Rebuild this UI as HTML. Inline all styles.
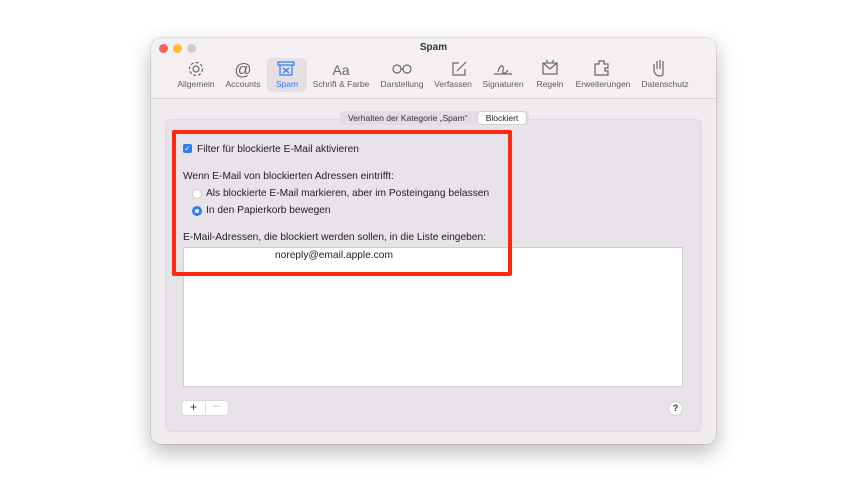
<!DOCTYPE html>
<html><head><meta charset="utf-8"><style>
body{margin:0;width:864px;height:486px;background:#fff;font-family:"Liberation Sans",sans-serif;position:relative;overflow:hidden}
.a{position:absolute}
.win{left:151px;top:38px;width:565px;height:406px;background:#efebef;border-radius:10px;box-shadow:0 8px 22px rgba(0,0,0,.28),0 0 0 1px rgba(0,0,0,.08)}
.tb{left:0;top:0;width:565px;height:60px;background:#f3eff3;border-bottom:1px solid #d8d4d8;border-radius:10px 10px 0 0}
.lbl{font-size:8.5px;color:#5e5a5e;transform:translateX(-50%);white-space:nowrap;top:41px}
.t{font-size:10.2px;color:#222;white-space:nowrap}
</style></head><body>
<div class="a win">
 <div class="a tb"></div>
 <div class="a" style="left:8px;top:6px;width:9px;height:9px;border-radius:50%;background:#fe5f57"></div>
 <div class="a" style="left:22px;top:6px;width:9px;height:9px;border-radius:50%;background:#febc2e"></div>
 <div class="a" style="left:36px;top:6px;width:9px;height:9px;border-radius:50%;background:#cfcbcf"></div>
 <div class="a" style="left:0;width:565px;top:4px;text-align:center;font-size:10px;font-weight:bold;color:#333">Spam</div>
 <div class="a" style="left:116px;top:20px;width:40px;height:34px;background:#e3dfe3;border-radius:5px"></div>
 <svg class="a" style="left:0;top:0" width="565" height="60" fill="none" stroke="#6a666a" stroke-width="1.2">
  <circle cx="45" cy="31" r="3"/><circle cx="45" cy="31" r="6.5" stroke-dasharray="3 2"/>
  <text x="92" y="37" font-size="17" fill="#6a666a" stroke="none" text-anchor="middle" font-family="Liberation Sans">@</text>
  <g stroke="#2f7cf6"><rect x="127" y="24" width="16" height="3"/><path d="M129 27v10h12V27"/><path d="M132 30l6 5M138 30l-6 5"/></g>
  <text x="190" y="37" font-size="14" fill="#6a666a" stroke="none" text-anchor="middle" font-family="Liberation Sans">Aa</text>
  <circle cx="246" cy="31" r="4"/><circle cx="256" cy="31" r="4"/><path d="M250 31h2"/>
  <path d="M308 25h-6v12h12v-6M306 33l9-9"/>
  <path d="M343 36h18M347 34c2-8 6-8 5-2s4 2 5 0"/>
  <rect x="392" y="25" width="14" height="11"/><path d="M392 25l7 6 7-6M395 22l2 2M403 22l-2 2"/>
  <path d="M444 26h4v-3h5v3h4v4h-3v3h3v4h-13z"/>
  <path d="M509 38c-4 0-6-3-6-7v-5M506 31v-8M509 31v-9M512 31v-8M512 26v10c0 1-1 2-3 2"/>
 </svg>
 <div class="a lbl" style="left:45px">Allgemein</div>
 <div class="a lbl" style="left:92px">Accounts</div>
 <div class="a lbl" style="left:136px;color:#2f7cf6">Spam</div>
 <div class="a lbl" style="left:190px">Schrift &amp; Farbe</div>
 <div class="a lbl" style="left:251px">Darstellung</div>
 <div class="a lbl" style="left:302px">Verfassen</div>
 <div class="a lbl" style="left:352px">Signaturen</div>
 <div class="a lbl" style="left:399px">Regeln</div>
 <div class="a lbl" style="left:452px">Erweiterungen</div>
 <div class="a lbl" style="left:514px">Datenschutz</div>
 <div class="a" style="left:14px;top:81px;width:535px;height:311px;background:#e8e3e8;border-radius:6px;border:1px solid #e0dbe0"></div>
 <div class="a" style="left:189px;top:73px;width:189px;height:14px;background:#e2dde2;border-radius:4px"></div>
 <div class="a" style="left:197px;top:75px;font-size:8.5px;color:#333">Verhalten der Kategorie „Spam“</div>
 <div class="a" style="left:327px;top:74px;width:48px;height:12px;background:#fff;border-radius:3px;box-shadow:0 0 1px rgba(0,0,0,.4);font-size:8.5px;text-align:center;line-height:12px;color:#222">Blockiert</div>
 <div class="a" style="left:32px;top:209px;width:498px;height:138px;background:#fff;border:1px solid #d0ccd0"></div>
 <div class="a t" style="left:124px;top:212px">noreply@email.apple.com</div>
 <div class="a" style="left:32px;top:106px;width:9px;height:9px;background:#2f7cf6;border-radius:2px;color:#fff;font-size:8px;line-height:9px;text-align:center">✓</div>
 <div class="a t" style="left:46px;top:106px">Filter für blockierte E-Mail aktivieren</div>
 <div class="a t" style="left:32px;top:133px">Wenn E-Mail von blockierten Adressen eintrifft:</div>
 <div class="a" style="left:41px;top:151px;width:8px;height:8px;border-radius:50%;background:#fff;border:1px solid #ccc"></div>
 <div class="a t" style="left:55px;top:150px">Als blockierte E-Mail markieren, aber im Posteingang belassen</div>
 <div class="a" style="left:41px;top:168px;width:4px;height:4px;border-radius:50%;background:#fff;border:3px solid #2f7cf6"></div>
 <div class="a t" style="left:55px;top:167px">In den Papierkorb bewegen</div>
 <div class="a t" style="left:32px;top:194px">E-Mail-Adressen, die blockiert werden sollen, in die Liste eingeben:</div>
 <div class="a" style="left:31px;top:363px;width:46px;height:14px;background:#fff;border-radius:3px;box-shadow:0 0 1px rgba(0,0,0,.4)"></div>
 <div class="a" style="left:39px;top:362px;font-size:12px;color:#333">+</div>
 <div class="a" style="left:54px;top:364px;width:1px;height:12px;background:#ddd"></div>
 <div class="a" style="left:62px;top:361px;font-size:12px;color:#bbb">−</div>
 <div class="a" style="left:518px;top:364px;width:13px;height:13px;border-radius:50%;background:#fff;box-shadow:0 0 1px rgba(0,0,0,.5);font-size:9px;font-weight:bold;text-align:center;line-height:13px;color:#333">?</div>
</div>
<div class="a" style="left:172px;top:130px;width:332px;height:138px;border:4px solid #fb2a10;border-radius:2px"></div>
</body></html>
